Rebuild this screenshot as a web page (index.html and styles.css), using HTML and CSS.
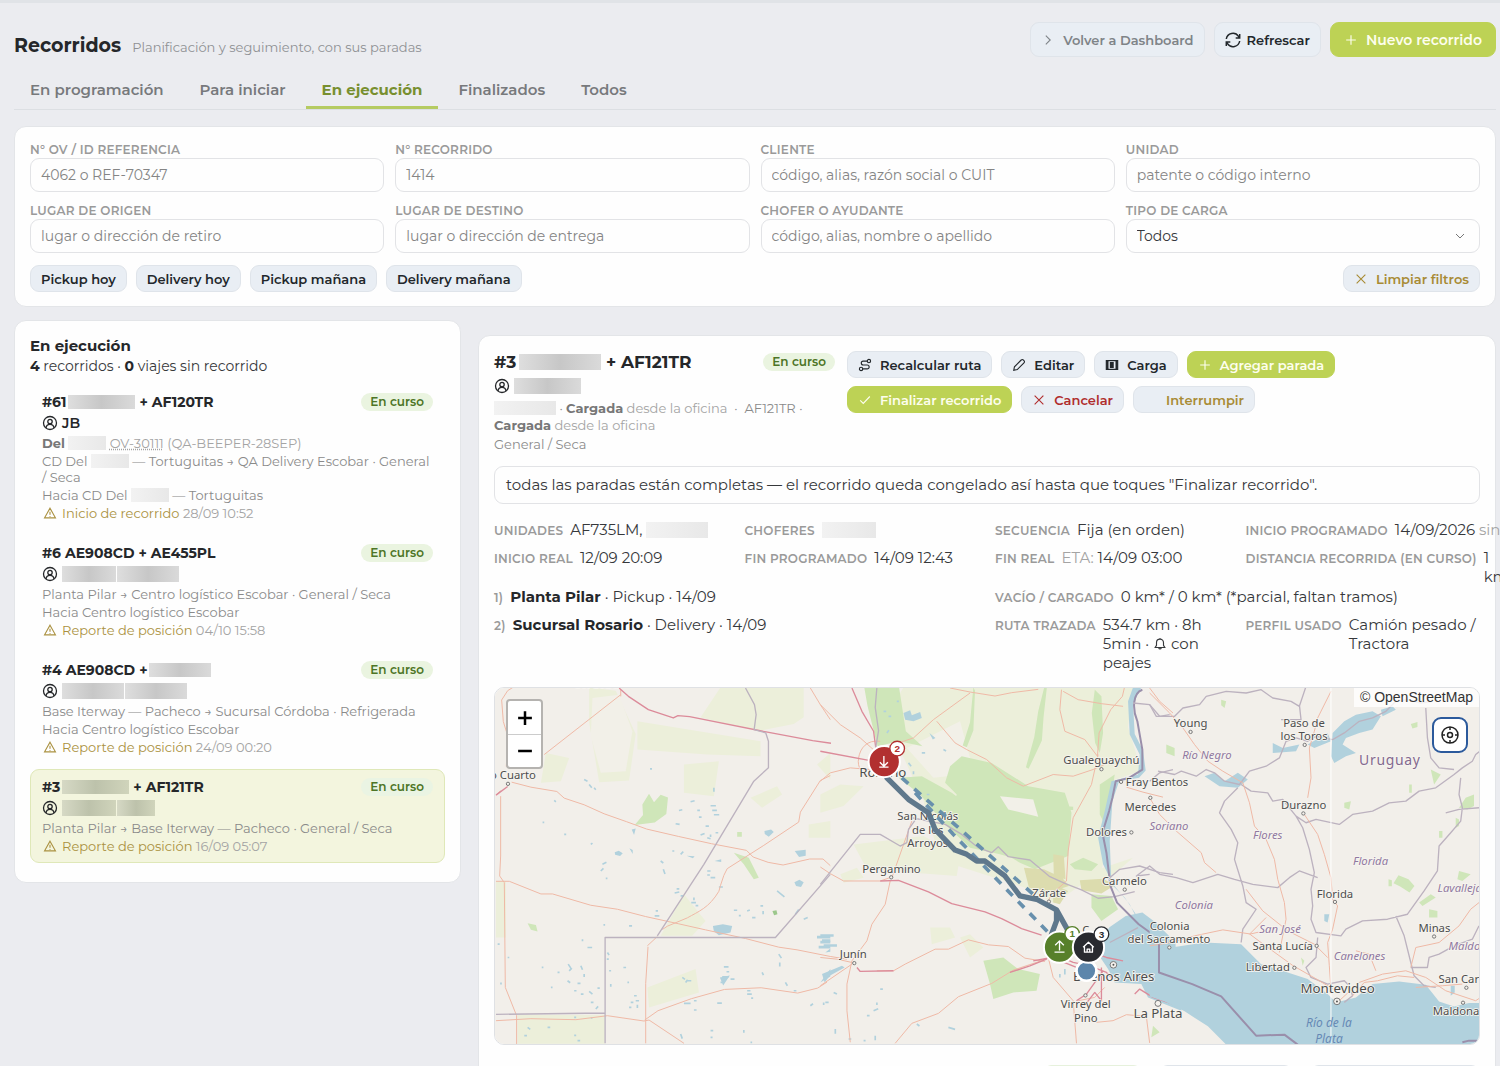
FILE: index.html
```html
<!DOCTYPE html>
<html lang="es">
<head>
<meta charset="utf-8">
<meta name="viewport" content="width=device-width, initial-scale=1">
<title>Recorridos</title>
<link rel="stylesheet" href="styles.css">
</head>
<body>
<svg class="sprite" aria-hidden="true">
  <symbol id="i-user" viewBox="0 0 16 16"><circle cx="8" cy="8" r="6.5"/><circle cx="8" cy="6.5" r="2.2"/><path d="M4 13c.3-2.300 1.800-3.600 4-3.600s3.700 1.300 4 3.600"/></symbol>
  <symbol id="i-warn" viewBox="0 0 16 16"><path d="M8 2.500 14.200 13.500H1.800ZM8 6.500v3.500M8 11.300v1"/></symbol>
  <symbol id="i-plus" viewBox="0 0 16 16"><path d="M8 2.500v11M2.500 8h11"/></symbol>
  <symbol id="i-x" viewBox="0 0 16 16"><path d="m3 3 10 10M13 3 3 13"/></symbol>
  <symbol id="i-check" viewBox="0 0 16 16"><path d="m2.500 8.500 3.500 3.500 7.500-8"/></symbol>
  <symbol id="i-right" viewBox="0 0 16 16"><path d="m5.500 3 5 5-5 5"/></symbol>
  <symbol id="i-refresh" viewBox="0 0 16 16"><path d="M1.300 7A6.700 6.700 0 0 1 13.500 4.400l1 1.400M14.700 9A6.700 6.700 0 0 1 2.500 11.600l-1-1.400M14.700 2v4h-4M1.300 14v-4h4"/></symbol>
  <symbol id="i-route" viewBox="0 0 16 16"><circle cx="12.500" cy="3.500" r="1.900"/><circle cx="3.500" cy="12.500" r="1.900"/><path d="M10.600 3.500H6a2.200 2.200 0 0 0 0 4.500h4.500a2.200 2.200 0 0 1 0 4.500H5.400"/></symbol>
  <symbol id="i-pen" viewBox="0 0 16 16"><path d="m2 14 .8-4L10.500 2.300a1.700 1.700 0 0 1 2.500 0l.7.700a1.700 1.700 0 0 1 0 2.500L6 13.200Z"/></symbol>
  <symbol id="i-load" viewBox="0 0 16 16"><path d="M1.500 3h13v10h-13Z"/><path class="solid" d="M5.500 4.500h4.500v7H5.500ZM1.500 3H4v10H1.500ZM12 3h2.500v10H12Z"/></symbol>
  <symbol id="i-bell" viewBox="0 0 16 16"><path d="M2.500 12h11L12 9.500V6.500a4 4 0 0 0-8 0v3ZM8 1v1.500M6.500 12.500a1.600 1.600 0 0 0 3 0"/></symbol>
  <symbol id="i-target" viewBox="0 0 20 20"><circle cx="10" cy="10" r="8"/><circle cx="10" cy="10" r="2.500"/><path d="M10 2v3M10 15v3M2 10h3M15 10h3"/></symbol>
</svg>

<main class="page">
  <header class="page-head">
    <div class="heading">
      <h1>Recorridos</h1>
      <p>Planificación y seguimiento, con sus paradas</p>
    </div>
    <div class="head-actions">
      <button class="btn muted" type="button"><svg class="icon"><use href="#i-right"/></svg>Volver a Dashboard</button>
      <button class="btn snug" type="button"><svg class="icon large"><use href="#i-refresh"/></svg>Refrescar</button>
      <button class="btn primary" type="button"><svg class="icon"><use href="#i-plus"/></svg>Nuevo recorrido</button>
    </div>
  </header>

  <nav class="tabs">
    <a href="#programacion">En programación</a>
    <a href="#iniciar">Para iniciar</a>
    <a href="#ejecucion" class="active" aria-current="page">En ejecución</a>
    <a href="#finalizados">Finalizados</a>
    <a href="#todos">Todos</a>
  </nav>

  <form class="card filters">
    <div class="fields">
      <div class="field"><label for="f-ov">N° OV / ID REFERENCIA</label><input id="f-ov" type="text" placeholder="4062 o REF-70347"></div>
      <div class="field"><label for="f-rec">N° RECORRIDO</label><input id="f-rec" type="text" placeholder="1414"></div>
      <div class="field"><label for="f-cli">CLIENTE</label><input id="f-cli" type="text" placeholder="código, alias, razón social o CUIT"></div>
      <div class="field"><label for="f-uni">UNIDAD</label><input id="f-uni" type="text" placeholder="patente o código interno"></div>
      <div class="field"><label for="f-ori">LUGAR DE ORIGEN</label><input id="f-ori" type="text" placeholder="lugar o dirección de retiro"></div>
      <div class="field"><label for="f-des">LUGAR DE DESTINO</label><input id="f-des" type="text" placeholder="lugar o dirección de entrega"></div>
      <div class="field"><label for="f-cho">CHOFER O AYUDANTE</label><input id="f-cho" type="text" placeholder="código, alias, nombre o apellido"></div>
      <div class="field"><label for="f-tip">TIPO DE CARGA</label><select id="f-tip"><option>Todos</option></select></div>
    </div>
    <div class="chips">
      <button class="btn small" type="button">Pickup hoy</button>
      <button class="btn small" type="button">Delivery hoy</button>
      <button class="btn small" type="button">Pickup mañana</button>
      <button class="btn small" type="button">Delivery mañana</button>
      <button class="btn small warn push" type="reset"><svg class="icon"><use href="#i-x"/></svg>Limpiar filtros</button>
    </div>
  </form>

  <div class="columns">
    <section class="card list">
      <h2>En ejecución</h2>
      <p class="count"><b>4</b> recorridos · <b>0</b> viajes sin recorrido</p>
      <ul class="trips">
        <li class="trip">
          <div class="trip-top"><h3>#61 <span class="mask w68"></span> + AF120TR</h3><span class="badge">En curso</span></div>
          <p class="driver"><svg class="icon"><use href="#i-user"/></svg>JB</p>
          <p><b>Del</b> <span class="mask pale w40"></span> <span class="faint"><abbr>OV-30111</abbr> (QA-BEEPER-28SEP)</span></p>
          <p>CD Del <span class="mask pale w40"></span> — Tortuguitas → QA Delivery Escobar · General / Seca</p>
          <p>Hacia CD Del <span class="mask pale w40"></span> — Tortuguitas</p>
          <p class="event"><svg class="icon"><use href="#i-warn"/></svg>Inicio de recorrido <time>28/09 10:52</time></p>
        </li>
        <li class="trip">
          <div class="trip-top"><h3>#6 AE908CD + AE455PL</h3><span class="badge">En curso</span></div>
          <p class="driver"><svg class="icon"><use href="#i-user"/></svg><span class="mask w50"></span><span class="mask w60"></span></p>
          <p>Planta Pilar → Centro logístico Escobar · General / Seca</p>
          <p>Hacia Centro logístico Escobar</p>
          <p class="event"><svg class="icon"><use href="#i-warn"/></svg>Reporte de posición <time>04/10 15:58</time></p>
        </li>
        <li class="trip">
          <div class="trip-top"><h3>#4 AE908CD + <span class="mask w60"></span></h3><span class="badge">En curso</span></div>
          <p class="driver"><svg class="icon"><use href="#i-user"/></svg><span class="mask w60"></span><span class="mask w60"></span></p>
          <p>Base Iterway — Pacheco → Sucursal Córdoba · Refrigerada</p>
          <p>Hacia Centro logístico Escobar</p>
          <p class="event"><svg class="icon"><use href="#i-warn"/></svg>Reporte de posición <time>24/09 00:20</time></p>
        </li>
        <li class="trip selected">
          <div class="trip-top"><h3>#3 <span class="mask w68"></span> + AF121TR</h3><span class="badge">En curso</span></div>
          <p class="driver"><svg class="icon"><use href="#i-user"/></svg><span class="mask w50"></span><span class="mask w40"></span></p>
          <p>Planta Pilar → Base Iterway — Pacheco · General / Seca</p>
          <p class="event"><svg class="icon"><use href="#i-warn"/></svg>Reporte de posición <time>16/09 05:07</time></p>
        </li>
      </ul>
    </section>

    <section class="card detail">
      <div class="detail-head">
        <div class="summary">
          <div class="trip-top"><h2>#3 <span class="mask w80"></span> + AF121TR</h2><span class="badge">En curso</span></div>
          <p class="driver"><svg class="icon"><use href="#i-user"/></svg><span class="mask w68"></span></p>
          <p class="cargo"><span class="mask pale w60"></span> · <b>Cargada</b> <span class="faint">desde la oficina</span> &nbsp;·&nbsp; AF121TR ·<br><b>Cargada</b> <span class="faint">desde la oficina</span></p>
          <p>General / Seca</p>
        </div>
        <div class="actions">
          <button class="btn small" type="button"><svg class="icon"><use href="#i-route"/></svg>Recalcular ruta</button>
          <button class="btn small" type="button"><svg class="icon"><use href="#i-pen"/></svg>Editar</button>
          <button class="btn small" type="button"><svg class="icon"><use href="#i-load"/></svg>Carga</button>
          <button class="btn small primary" type="button"><svg class="icon"><use href="#i-plus"/></svg>Agregar parada</button>
          <button class="btn small primary" type="button"><svg class="icon"><use href="#i-check"/></svg>Finalizar recorrido</button>
          <button class="btn small danger" type="button"><svg class="icon"><use href="#i-x"/></svg>Cancelar</button>
          <button class="btn small warn" type="button"><svg class="icon"></svg>Interrumpir</button>
        </div>
      </div>

      <p class="notice">todas las paradas están completas — el recorrido queda congelado así hasta que toques "Finalizar recorrido".</p>

      <dl class="facts">
        <div><dt>UNIDADES</dt><dd>AF735LM, <span class="mask pale w60"></span></dd></div>
        <div><dt>CHOFERES</dt><dd><span class="mask pale w50"></span></dd></div>
        <div><dt>SECUENCIA</dt><dd>Fija (en orden)</dd></div>
        <div><dt>INICIO PROGRAMADO</dt><dd class="line">14/09/2026 <span class="faint">sin hora</span></dd></div>
        <div><dt>INICIO REAL</dt><dd>12/09 20:09</dd></div>
        <div><dt>FIN PROGRAMADO</dt><dd>14/09 12:43</dd></div>
        <div><dt>FIN REAL</dt><dd><span class="faint">ETA:</span> 14/09 03:00</dd></div>
        <div><dt>DISTANCIA RECORRIDA (EN CURSO)</dt><dd>1 km</dd></div>
      </dl>
      <dl class="facts route">
        <div class="wide"><dt>1)</dt><dd><b>Planta Pilar</b> · Pickup · 14/09</dd></div>
        <div class="wide"><dt>VACÍO / CARGADO</dt><dd>0 km* / 0 km* (*parcial, faltan tramos)</dd></div>
        <div class="wide"><dt>2)</dt><dd><b>Sucursal Rosario</b> · Delivery · 14/09</dd></div>
        <div><dt>RUTA TRAZADA</dt><dd>534.7 km · 8h<br>5min · <svg class="icon"><use href="#i-bell"/></svg> con<br>peajes</dd></div>
        <div><dt>PERFIL USADO</dt><dd>Camión pesado /<br>Tractora</dd></div>
      </dl>

      <div class="map">
        <svg class="map-canvas" viewBox="0 0 2958 1074" preserveAspectRatio="xMidYMid slice" role="img" aria-label="Mapa del recorrido">
          <rect class="land" width="2958" height="1074"/>
          <!-- west -->
          <g transform="translate(-42 -18)">
            <path class="field-green" d="M720 18h250v90l-30 20-100 20-100-20-80-20ZM470 120l370 60v45l-160-5-210-15ZM610 250l105-10-15 105-90-10ZM195 215l70 15-25 70-60 5ZM45 600h30v170H45ZM110 1003h262v86H110ZM500 920l145-55 10 70-150 45ZM540 765l70-125 65 80-40 45ZM985 430l65-10v50h-65ZM1010 250l40-35v80ZM810 350l80-35 15 25-60 40ZM325 18l80 10 60 130-20 140-90 5-30-180Z"/>
            <path class="field-white" d="M335 50l80-10 40 110-20 120-75 5-30-110Z"/>
            <path class="wood" d="M485 370l20-32 15 25 20-22 22 8-5 50-35 25-60 8 25-30ZM760 515l45 15 30 60-15 5-30-45ZM770 453h14v14h-14ZM140 727l25 5 5 20-20-5Z"/>
            <path class="wood dark" d="m876 690 12-2 3 12-10 3Z"/>
            <path class="water" d="M697 735l30-5 28 5-5 20-35 8-15-12ZM943 510l33-4v18l-20 4ZM942 604l15-8 13 8-8 14-15-3ZM852 450l20-5 8 8-15 14-12-8ZM402 514l12-5 12 8-8 8-15-4ZM453 445l12-3-5 20ZM446 502l10 5v12ZM702 540l20-5v8ZM618 524l24 2-5 6ZM1010 765h40v8h-40ZM1020 780h30v8h-30ZM1015 795h35v8h-35ZM1035 815l15-12v10ZM1020 905l30-40v22ZM718 890l30-6-20 30Z"/>
            <path class="specks" d="M310 295l10 5M325 310l8 10M340 320l5 6M508 263h6M700 320v12M630 362l12-3M595 388l10-2M690 374h16M695 388h14M700 401h16M585 428l12 2M650 388h8M655 408h8M675 435h10M660 462l12-5M690 460v8M680 470l10 3M705 455h8M360 570l8-8M365 550l12-6M330 490l5-4M375 592h5M220 358l5 4M185 424h5M250 460h6M540 540l8 6M548 565l5 14M575 510h6M600 520l8-8M582 636l14-3M588 624h8M600 645h10M632 665h14M645 674h8M640 650v8M680 570h10M690 590h14M680 582h8M715 618h12M760 688h10M775 704h6M800 690l8-3M815 710h10M848 690v10M840 675h8M890 630l10 8 12 10M945 700l10-14M970 715l12-5M522 705h14M525 690h7M445 735h9M368 732h5M305 775v6M320 800h14M262 850l8 12M265 870l8-8M300 855l5 12M310 880v9M260 900l8 6M290 908h9M280 930h7M300 940h8M325 932l10 8M350 922h7M330 965h8M345 985l7-8M380 815l5 8M378 835h6M428 860h8M385 870h6M390 910v8M440 905h5M460 945h8M465 960h10M450 965h8M470 972v10M445 980h7M185 857v5M230 875h6M210 920h5M80 830h5M50 790h6M60 905v6M730 858h14M738 873h8M725 888h20M750 895h12M720 905h8M845 875l4 8M895 820l8 12M898 845v12M915 905l6 10M940 930h8M800 930h10M800 940h14M812 952h6M710 967h14M610 968h20M640 960h8M620 900h12M605 890l8 6M615 905l6-8M640 988h8M600 1060l5 14M690 1050h8M690 1070h6M790 1048v8M810 1085h5M990 975l8-6M1035 965h10M280 1010h6M330 1012h5M140 1040l8 6M200 1040h8M130 1065h8M280 1064h6M290 1080h8"/>
            <path class="road" d="M96 18 80 28 62 56l5 65 14 45-5 90M420 40 190 220M420 25v20M990 20l30 50 30 45M92 303l58 15 78 13 22 20 60 20 60 27 68 24 60 22 95 22 100 22 105 20 20 20 45 16 45 8 80-18h40l22 20M1050 283l-30 15-60 95-5 30-105 70-110 70-10 20-10 30-5 18c-30 50-60 60-95 80l-60 25-15 10M45 342l14-14M45 601h40l95 38h35l115 34 80 12 85 22 100 22 80 18 120 26 100 26 55 8 100 20 50 8M59 345v180l-3 60 14 20 3 315 34 85v85M45 1020l105-6 135 3 95-12 110 16 15-3 105 70M500 795l30-28M495 1088v-180l7-110M492 1018l40-28 100-36 100-28 110-5 110 16 60-15 28-18"/>
            <path class="road major" d="m415 20 28 25 60 40 75 25 14-7 35 3 230 46 140 26 55 8"/>
            <path class="road major" d="m45 342 35-26"/>
            <path class="border" d="m795 20 27 50 5 30-6 45 35 10 8 25v80l-44 40-150 250-140 215M373 1088V770h512l165-190M45 1001l328-4"/>
          </g>
          <!-- centre -->
          <g transform="translate(978 -18)">
            <path class="field-green" d="M250 18h690l-15 120 40 130-85 30-15 180-20 90-140 100-95-50-250-80-50-180-60-130-60-110ZM100 490l210-25 110 60-10 60-270-20ZM60 580l50-20 20 30-60 15ZM760 590l180-60-70 60-90 20ZM420 770l30-10 40 40-40 30ZM0 340l60-30 70 5-60 60-70 20ZM330 740h60l15 30-70 20Z"/>
            <path class="field-white" d="m260 200 160-80 30 110 150 90 60 20-120 20-110-80-90 10Z"/>
            <path class="wood" d="m132 18 105 2 20 130 50 45-70-15-65 15-30-120ZM390 255l35-30 90 20 110 70 110 20 20 60-10 130-100 40-45-20-130-75-100-60 60-10-30-30 10-30-35-35ZM235 290l70-5 90 50 60 45 75 55 60 45 20 60-70-20-90-20-80-75-70-85ZM655 90l18-72h8l-10 90-5 70-40 85-8-5 25-90ZM460 18l5 10-5 120-20 50-12-5 22-70ZM825 25l20 20 5 110-10 60-14-30-10-90ZM840 310l45-30-25 160-20-40ZM815 640l60 5 20 40-50 35-30-40ZM490 840l60-10 45 35 65 15-10 50-70 5-60 20-10-45ZM750 550l40-20 45 20-20 20-50-5ZM700 372l60 5v10l-50-5ZM1000 1035l20 20-25 15Z"/>
            <path class="field-white" d="m540 345 100 10 15 52-90-22Z"/>
            <path class="scrub" d="m700 520 32 5 5 70-35-10ZM612 560l60 5 55 25 20 25-60 20-60-15ZM780 598l70-5 35 20-40 25-60-10ZM700 610l45 20-25 40-20-5Z"/>
            <path class="water" d="M940 18h25l-25 50 5 90 25 50 8 60-20 22-60 10-20 60-8 120 5 130 40 40 40 60 60 50 10 50-120-70-60 5-20 60 40 60 20 40 80 5 20 40 100 40v-115H990V790l-60-120-50-60-30-60-15-80 20-80 20-90 80-20 5-60-30-60-5-100Z"/>
            <path class="water" d="m868 740 50-35 50-10 40 30 60 60 0 130-50-10-40-30-50-20-25-10-10-50-25-40ZM250 95l20-8 5 15 25-10 5 18-25 10-25-5ZM328 155l18 15-8 5ZM0 760h40v8H0ZM5 775h25v8H5ZM10 790h40v8H10ZM5 880l60-25 8 5-45 25-15 20Z"/>
            <path class="specks" d="M190 90h8M205 105h8M230 60h6M200 155l6-8M265 245l8 10M280 270v9M305 215h10M320 340h8M370 205l8 4M210 260h8M40 935l10 5M10 965v8M170 965v8M160 990l14-6M140 1005h8M45 1045v14M85 1075h8M165 1065v14M130 1080h6M290 1030l8 6M385 1040l20 6M180 925h8M720 880v10M735 865v16"/>
            <path class="road" d="m390 20 60 12 75 12 50-10 80-10M0 70l60 60 60 40 45 40M450 35l-110 80-60 55-120 40M350 120l55 65 35 20 60 30 60 55 50 25 90-35 60 5 60-20 45-20M725 25l-5 60 15 65 60 25 38 50 5-70 35-70 35-40 15-65M730 30l45 25 70 12 65 8M835 220l-20 90-55 100-15 100-5 90-45 40-10 20M180 180c-40-5-60 20-65 50s10 50 40 60M0 300l30-25 60-15 60 5M275 420l-60 170M0 558l30 20 40 22h110l35-12M210 600l-15 70-40 60-15 50-45 60-15 70v80l10 95M225 1088l50-60 80-30 60-50 100-40 65-40 90-30M170 870h50l35-20 90-45h40l60-28 60 15 60 5 50 35 60 10M0 915l95-65M0 830l50 5 45 10M685 830l15 60 60 70 10 128M775 960l50-10 30-30M830 1025l50-5 40-18 60 5 10 80M990 20l30 40 40 35M920 318l50 15 60 15"/>
            <path class="road major" d="m95 20 30 70 35 60 8 60M0 210l150 28M180 600l55-2 90 35 70 35 100 25 50 20 60 30 60 20M110 860l10 12 100-2M570 875l60-20 50-20 10-20 70 30 50 10 50 20 20 20M640 840l55-10 75 30M845 860v100l-20-25-35 45M945 940l15-15 40 25 60 20M830 820l30 10 50 10M850 870l-50 70-30 20"/>
            <path class="border" d="m0 610 60-75 60-75 60 0 60 35 20-10 5-40 25-35M275 410l100 20 50 30 50 40 40 15 20-18 30 30 65 10 60 50 45 20 50 20 50 25 50-5 60-15M170 18l-5 60 10 70-10 60"/>
            <path class="border strong" d="M968 25c-30 10-30 60-15 95l15 85v60l-40 25-40 10-10 50-10 40-20 65 12 60 12 100 20 50 65 65 55 40M1018 780v93l50 10"/>
            <path class="border" d="m870 785 85-45M940 65l50 5 30 35 30-5M870 590l30-25 60-10 60 20 40 5M990 300l30-25 40-10"/>
          </g>
          <!-- east -->
          <g transform="translate(1968 -18)">
            <path class="water" d="m0 725 30 25 35 50 100-15 110 5 60 60 80 25 60 20 60 45 25 25 60-15 50-40 80-8 80 10 40 50 45 15 45-10 35 0v130H235l-60-60-70-45-60-30-45-15Z"/>
            <path class="water" d="m550 155 35-35 35-20 50-10 25 15-25 40-40 10-40 15-10 20 40 25-30 10-35 20-10-20ZM475 190l60-35 10 25-50 20ZM370 185l30 15 50-10-10 20-70 5ZM165 285l30-10 30 25 40-25 30 20-30 25-55-5ZM695 85l35-10 10 10-40 20ZM905 915h12v20l-12 10ZM525 700l15 0-5 25-10-5Z"/>
            <path class="wood" d="m748 583 30 12 18 20-15 20-28-18-20-10ZM718 595l10 3v18h-10ZM845 640l15 10-40 25-10-10ZM840 685l25 5v20l-25 0ZM585 365l20-5-5 25-15-5ZM930 380l20-30 25-10v35l-20 10ZM845 265l30 15-20 30ZM930 570l35 10-25 20-15-5ZM785 128l20-6v15l-15 5ZM50 190l25 10v25l-25-10ZM215 55l15 5-5 20-10-8ZM870 450h10v20h-10ZM920 410l10 5v20l-10 5ZM780 310h8v25h-8ZM455 830l10 10-5 15Z"/>
            <path class="border" d="m0 70 20 35h55l25-25 50-10 20-25 60-15 60 5 45-10 35 25 55 10 25 15 20-60M450 70l5 45-60 0M0 580l-40 5 40-30 30 25 50 10 50 15 75-25 50 15 55 15 75 10 35-30 30-20 55 20M25 270l50 10 20-10 45 15 30-20 25 10 30 25 45 10 30-40 50-15 40-25 20-50 30-10 35 10 25-15 50 10 35-20 45-35 40-10 40-20 30-30 35-5 40 10 35-5M265 320l-40 40-15 35 35 50 20 40-10 50 25 80 10 50 30 20-40 60-5 40M275 310l30 20 50 5 15 25 30-5 40 50 30 20 30-10 70 15 40-30 60-10 50-25 50-5 40-30 50-10 55-40 25-20 30-20 10-20 50-40M440 405l20 35 20 65 15 70-10 50 5 50-5 40 15 40 75 10 15-20 50-25 75-5 60-15 50-70 40-60 5-75 35-40 30-35 5-40-10-40 5-50M890 395l40-10 60-5M830 80l5 90 10 60 25 30 45 5M740 705l25 60 20 80 10 40 30 30 35 5M785 860h50l5-30 30-10 45-25 55-20 20-40M505 770l-5 60-30 30 15 30 50 20 50-10 15 15 10 30-25 20"/>
            <path class="road" d="m0 35 60 60 40 45 35 50 40 50 45 30 60 35 20 60 15 70 35 40 25 60 10 60 20 70 5 50-20 100M545 30l-40 80-10 40-15 50 5 90-10 60M465 400l40 60 20 60 20 70 5 65 15 20-15 70-15 40 5 70 5 70M0 350l30 50 50 50 75 65 10 30 35 30M290 625l50 65 75 60 40 20 40 20 40 40M0 795l65-10 70-20 85-18 80 12 40 30 90 65 70 40 50 30M570 960l60-55 70-25 70-10 60 20 60 40 90 30 15-10M800 920l80-5 60-5M785 860l15-60 70-15 60-50 35-50 25-20M300 760l45-10M300 760l50-50"/>
            <path class="road" d="m610 945 35-40 40-5 60-15 50 5M680 870l-20-50-40-10"/>
            <path class="border strong" d="M28 790v85l100 35 87 37 105 118 85-3 40 30M940 1085l20-5h30"/>
            <path class="seam" d="M545 18v1071"/>
          </g>

          <g class="labels" transform="translate(-42 -18)">
            <text class="town" x="81" y="292">Río Cuarto</text><circle cx="81" cy="308" r="5"/>
            <text class="town" x="346" y="20">Córdoba</text>
          </g>
          <g class="labels" transform="translate(978 -18)">
            <text class="city" x="188" y="288">Rosario</text>
            <text class="town" x="323" y="418">San Nicolás</text><text class="town" x="323" y="458">de los</text><text class="town" x="323" y="498">Arroyos</text>
            <text class="town" x="214" y="575">Pergamino</text><circle cx="213" cy="589" r="5"/>
            <text class="town" x="99" y="832">Junín</text><circle cx="102" cy="847" r="5"/>
            <text class="town" x="845" y="249">Gualeguaychú</text><circle cx="845" cy="264" r="5"/>
            <text class="town" x="1012" y="314">Fray Bentos</text><circle cx="904" cy="302" r="5"/>
            <text class="town" x="992" y="389">Mercedes</text><circle cx="992" cy="350" r="5"/>
            <text class="region" x="1048" y="447">Soriano</text>
            <text class="town" x="860" y="465">Dolores</text><circle cx="935" cy="454" r="5"/>
            <text class="town" x="914" y="612">Carmelo</text><circle cx="915" cy="626" r="5"/>
            <text class="town" x="688" y="648">Zárate</text><circle cx="687" cy="662" r="5"/>
            <text class="town" x="798" y="760">C</text>
            <text class="city" x="882" y="901">Buenos Aires</text><circle cx="881" cy="852" r="10"/><circle class="dot" cx="881" cy="852" r="3"/>
            <text class="town" x="798" y="983">Virrey del</text><text class="town" x="798" y="1023">Pino</text><circle cx="797" cy="944" r="5"/>
            <text class="city" x="1015" y="1011">La Plata</text><circle cx="1015" cy="968" r="9"/>
            <text class="town" x="1050" y="746">Colonia</text><text class="town" x="1048" y="786">del Sacramento</text><circle cx="1049" cy="800" r="5"/>
          </g>
          <g class="labels" transform="translate(1968 -18)">
            <text class="town" x="123" y="138">Young</text><circle cx="123" cy="152" r="5"/>
            <text class="town" x="464" y="137">Paso de</text><text class="town" x="464" y="177">los Toros</text><circle cx="466" cy="191" r="5"/>
            <text class="region" x="172" y="233">Río Negro</text>
            <text class="country" x="722" y="251">Uruguay</text>
            <text class="town" x="463" y="385">Durazno</text><circle cx="462" cy="397" r="5"/>
            <text class="region" x="355" y="473">Flores</text>
            <text class="region" x="664" y="553">Florida</text>
            <text class="town" x="557" y="650">Florida</text><circle cx="557" cy="663" r="5"/>
            <text class="region" x="932" y="634">Lavalleja</text>
            <text class="region" x="133" y="684">Colonia</text>
            <text class="region" x="392" y="755">San José</text>
            <text class="town" x="400" y="807">Santa Lucía</text><circle cx="502" cy="795" r="5"/>
            <text class="region" x="631" y="839">Canelones</text>
            <text class="town" x="355" y="872">Libertad</text><circle cx="435" cy="861" r="5"/>
            <text class="city" x="565" y="937">Montevideo</text><circle cx="563" cy="962" r="10"/><circle class="dot" cx="563" cy="962" r="3"/>
            <text class="town" x="856" y="752">Minas</text><circle cx="855" cy="767" r="5"/>
            <text class="region" x="985" y="807">Maldonado</text>
            <text class="town" x="952" y="906">San Carlos</text><circle cx="952" cy="921" r="5"/>
            <text class="town" x="942" y="1002">Maldonado</text><circle cx="942" cy="966" r="5"/>
            <text class="sea" x="539" y="1038">Río de la</text><text class="sea" x="539" y="1086">Plata</text>
          </g>

          <g transform="translate(978 -18)">
            <path class="plan" d="m245 290 165 145 235 210M285 335l115 125 290 300"/>
            <path class="track" d="m200 290 65 65 60 40 20 50 60 62 35 13 30 20h25l60 45 45 60 50 10 60 32 35 63M710 690v30l-15 40"/>
            <circle class="pin here" cx="800" cy="870" r="30"/>
            <circle class="pin drop" cx="192" cy="241" r="47"/>
            <path class="glyph" d="M191 224v31m-12-12 12 12 12-12M177 258h28"/>
            <circle class="pin pick" cx="719" cy="799" r="47"/>
            <path class="glyph" d="M719 809v-28m-13 12 13-13 13 13M704 814h30"/>
            <circle class="num pick" cx="757" cy="759" r="22"/><text class="num-text pick" x="757" y="769">1</text>
            <circle class="pin base" cx="806" cy="799" r="47"/>
            <path class="glyph" d="m790 799 16-15 16 15M794 796v18h24v-18M802 814v-9h8v9"/>
            <circle class="num drop" cx="231" cy="202" r="22"/><text class="num-text drop" x="231" y="212">2</text>
            <circle class="num base" cx="845" cy="760" r="22"/><text class="num-text base" x="845" y="770">3</text>
          </g>
        </svg>
        <div class="zoom">
          <button type="button" aria-label="Acercar"><svg class="icon"><use href="#i-plus"/></svg></button>
          <button type="button" aria-label="Alejar"><svg class="icon" viewBox="0 0 16 16"><path d="M2.500 8h11"/></svg></button>
        </div>
        <a class="credit" href="#osm">© OpenStreetMap</a>
        <button class="locate" type="button" aria-label="Centrar"><svg class="icon"><use href="#i-target"/></svg></button>
      </div>

      <div class="foot">
        <button class="btn primary soft" type="button" aria-label="Agregar"></button>
        <button class="btn mid" type="button" aria-label="Editar"></button>
        <button class="btn long" type="button" aria-label="Ver"></button>
      </div>
    </section>
  </div>
</main>
</body>
</html>
```
FILE: styles.css
```css
* { box-sizing: border-box; }
html { scrollbar-width: none; }
body {
  margin: 0;
  overflow-x: hidden;
  background: #ebecf0;
  border-top: 3px solid #e0e3e7;
  color: #36383b;
  font-family: Montserrat, Inter, "Liberation Sans", sans-serif;
  font-size: 14px;
}
h1, h2, h3, p, ul, dl, dd { margin: 0; padding: 0; }
ul { list-style: none; }
b, h1, h2, h3 { font-weight: 700; color: #25272a; }
button, input, select { font: inherit; }
.sprite { position: absolute; width: 0; height: 0; }
.icon {
  width: 14px;
  height: 14px;
  flex: none;
  fill: none;
  stroke: currentColor;
  stroke-width: 1.3;
}
.icon.large { width: 16px; height: 16px; stroke-width: 1.5; }
.solid { fill: currentColor; stroke: none; }
.faint { color: #a4a4a4; }

.page { padding: 19px 4px 0 14px; }
.page-head { display: flex; justify-content: space-between; align-items: flex-start; }
.heading { display: flex; align-items: baseline; gap: 11px; padding-top: 12px; }
h1 { font-size: 19px; line-height: 24px; }
.heading p { color: #8f9194; font-size: 13px; }
.head-actions { display: flex; gap: 9px; }

.btn {
  display: inline-flex;
  align-items: center;
  justify-content: center;
  gap: 8px;
  height: 35px;
  padding: 0 10px;
  border: 1px solid #dfe4ea;
  border-radius: 9px;
  background: #e9eef4;
  color: #22272b;
  font-size: 13px;
  font-weight: 600;
  white-space: nowrap;
}
.btn.snug { gap: 6px; }
.btn.muted { color: #7f8488; }
.btn.primary { padding: 0 13px; background: #bdd255; border-color: #bdd255; color: #fdfeee; font-size: 14px; }
.btn.small { height: 27px; font-size: 13px; }
.btn.small.primary { padding: 0 10px; }
.btn.warn { color: #a88b34; }
.btn.danger { color: #b02d2d; }
.btn.push { margin-left: auto; }

.tabs { display: flex; gap: 4px; margin-top: 11px; border-bottom: 1px solid #dcdfe3; }
.tabs a {
  padding: 12px 16px 7px;
  border-bottom: 3px solid transparent;
  color: #77797c;
  font-size: 15px;
  font-weight: 600;
  line-height: 18px;
  text-decoration: none;
}
.tabs .active { border-color: #b5cb62; color: #788f2f; font-weight: 700; }

.card { background: #fefefe; border: 1px solid #e3e5e8; border-radius: 12px; }
.filters { margin-top: 16px; padding: 14px 15px; }
.fields { display: grid; grid-template-columns: repeat(4, minmax(0, 1fr)); gap: 10px 11px; }
.field label, dt {
  color: #9a9a9a;
  font-size: 12px;
  font-weight: 600;
  letter-spacing: 0.02em;
}
.field label { display: block; line-height: 17px; }
.field input, .field select {
  display: block;
  width: 100%;
  height: 34px;
  padding: 0 10px;
  border: 1px solid #e2e3e6;
  border-radius: 9px;
  background: #fefefe;
  color: #36383b;
}
.field input::placeholder { color: #858585; opacity: 1; }
.field select {
  appearance: none;
  background: #fefefe url("data:image/svg+xml,%3Csvg xmlns='http://www.w3.org/2000/svg' width='10' height='6' fill='none' stroke='%23777'%3E%3Cpath d='m1 1 4 4 4-4'/%3E%3C/svg%3E") no-repeat right 14px center;
}
.chips { display: flex; gap: 9px; margin-top: 12px; }

.columns {
  display: grid;
  grid-template-columns: minmax(0, 447fr) minmax(0, 1018fr);
  gap: 17px;
  align-items: start;
  margin-top: 13px;
}
.list { padding: 15px 15px 19px; }
.list h2 { font-size: 15px; line-height: 20px; }
.count { font-size: 14px; line-height: 20px; }
.trips { display: grid; gap: 5px; margin-top: 8px; }
.trip {
  padding: 7px 11px;
  border: 1px solid transparent;
  border-radius: 9px;
  color: #8a8a8a;
  font-size: 13px;
  line-height: 16px;
}
.trip.selected { background: #f3f5de; border-color: #dfe8b8; }
.trip-top { display: flex; justify-content: space-between; align-items: center; }
.trip h3 { font-size: 14px; line-height: 20px; }
.trip p, .summary p { padding: 1px 0; }
.trip b, .summary b { color: #777; }
.badge {
  padding: 0 9px;
  border-radius: 9px;
  background: #eaf4e0;
  color: #4d7526;
  font-size: 12px;
  font-weight: 600;
  line-height: 18px;
}
.selected .badge { background: #eaf4e3; }
.trip .driver, .summary .driver {
  display: flex;
  align-items: center;
  gap: 4px;
  height: 22px;
  color: #25272a;
  font-size: 14px;
  font-weight: 600;
}
.driver .icon { width: 16px; height: 16px; }
.event { color: #aa9140; }
.event .icon { margin: 0 5px 0 1px; vertical-align: -2px; }
.event time { color: #a4a4a4; }
abbr { text-decoration: underline dotted; }

.mask {
  display: inline-block;
  height: 14px;
  background: linear-gradient(90deg, #dedede, #c7c7c7 50%, #dadada);
  vertical-align: -2px;
}
.mask.pale { background: linear-gradient(90deg, #f2f2f2, #e8e8e8); }
.selected .mask { background: linear-gradient(90deg, #d6d9c5, #bdc2ab 50%, #d0d4bb); }
h2 .mask, h3 .mask { margin-left: -2px; }
h2 .mask, .driver .mask, .facts .mask { height: 16px; }
.facts .mask { vertical-align: -3px; }
.driver .mask { margin-right: -3px; }
.w40 { width: 38px; }
.w50 { width: 54px; }
.w60 { width: 62px; }
.w68 { width: 67px; }
.w80 { width: 82px; }

.detail { margin-top: 15px; padding: 15px 15px 14px; }
.detail-head { display: grid; grid-template-columns: minmax(0, 341fr) minmax(0, 633fr); gap: 12px; }
.summary { color: #8a8a8a; font-size: 13px; line-height: 17px; }
.summary h2 { font-size: 17px; line-height: 22px; }
.summary .driver { height: 26px; }
.actions { display: flex; flex-wrap: wrap; align-content: flex-start; gap: 8px 9px; }
.notice {
  margin-top: 12px;
  padding: 9px 11px;
  border: 1px solid #e2e3e6;
  border-radius: 9px;
  font-size: 15px;
  line-height: 18px;
}
.facts {
  display: grid;
  grid-template-columns: repeat(4, minmax(0, 1fr));
  gap: 8px 16px;
  margin-top: 16px;
  font-size: 15px;
  line-height: 19px;
}
.facts > div { display: flex; gap: 7px; align-items: baseline; }
.facts .wide { grid-column: span 2; }
.facts.route { margin-top: 1px; }
.facts .icon { vertical-align: -2px; }
dt { flex: none; white-space: nowrap; }
.line { white-space: nowrap; }

.map {
  position: relative;
  height: 358px;
  margin-top: 15px;
  overflow: hidden;
  border: 1px solid #dfe1e4;
  border-radius: 10px;
}
.map-canvas { display: block; width: 100%; height: 100%; }
.map-canvas path { fill: none; stroke-linejoin: round; }
.land { fill: #f2efea; }
.map-canvas .field-green { fill: #ecefda; }
.map-canvas .field-white { fill: #f2f0e8; }
.map-canvas .wood { fill: #cfe6b9; }
.map-canvas .wood.dark { fill: #9cc78b; }
.map-canvas .scrub { fill: #dcdcae; }
.map-canvas .water { fill: #b1d1dd; }
.map-canvas .solid { fill: currentColor; }
.specks { stroke: #b1d1dd; stroke-width: 5; }
.road { stroke: #efb9a6; stroke-width: 3; }
.road.major { stroke: #dc8b9a; stroke-width: 4; }
.border { stroke: #bcb2bf; stroke-width: 4; }
.border.strong { stroke: #9a8fab; stroke-width: 6; }
.seam { stroke: #fff; stroke-width: 3; }
.labels { font-family: "Noto Sans", sans-serif; text-anchor: middle; fill: #4d4d4d; }
.labels text { paint-order: stroke; stroke: #f7f5f0; stroke-width: 5; }
.labels circle { fill: #f4f1ec; stroke: #777; stroke-width: 3; }
.labels .dot { fill: #555; stroke: none; }
.town { font-size: 34px; }
.city { font-size: 40px; }
.country { font-size: 42px; fill: #84698f; letter-spacing: 2px; }
.region { font-size: 34px; font-style: italic; fill: #9078a0; }
.labels text.sea { font-size: 36px; font-style: italic; fill: #6689b5; stroke: none; }
.track { stroke: #5f788c; stroke-width: 16; stroke-linecap: round; }
.plan { stroke: #6890ad; stroke-width: 11; stroke-dasharray: 26 24; }
.pin { stroke: #fff; stroke-width: 6; }
.pin.here { fill: #5c86ab; stroke-width: 8; }
.pin.drop { fill: #b23030; }
.pin.pick { fill: #57802a; }
.pin.base { fill: #292b30; }
.glyph { stroke: #fff; stroke-width: 4; }
.num { fill: #fff; stroke-width: 4; }
.num.drop { stroke: #b23030; }
.num.pick { stroke: #57802a; }
.num.base { stroke: #292b30; }
.num-text { font-family: "Liberation Sans", sans-serif; font-size: 30px; font-weight: 700; text-anchor: middle; }
.num-text.drop { fill: #b23030; }
.num-text.pick { fill: #57802a; }
.num-text.base { fill: #292b30; }
.zoom {
  position: absolute;
  top: 11px;
  left: 11px;
  display: grid;
  border: 2px solid #b5b3b0;
  border-radius: 4px;
  background: #fff;
}
.zoom button { display: grid; place-items: center; width: 33px; height: 33px; padding: 0; border: 0; background: none; color: #000; }
.zoom button + button { border-top: 1px solid #ccc; }
.zoom .icon { width: 20px; height: 20px; stroke-width: 2; }
.credit {
  position: absolute;
  top: 0;
  right: 0;
  padding: 0 6px;
  background: rgba(255, 255, 255, 0.8);
  color: #333;
  font-family: "Liberation Sans", sans-serif;
  font-size: 14px;
  line-height: 19px;
  text-decoration: none;
}
.locate {
  position: absolute;
  top: 29px;
  right: 11px;
  display: grid;
  place-items: center;
  width: 36px;
  height: 36px;
  padding: 0;
  border: 2px solid #2c5a9c;
  border-radius: 9px;
  background: #fff;
  color: #222;
}
.locate .icon { width: 20px; height: 20px; stroke-width: 1.5; }
.foot { display: flex; justify-content: flex-end; gap: 17px; margin-top: 20px; }
.foot .btn { width: 134px; }
.foot .long { width: 170px; }
.foot .soft { width: 99px; background: #e6f1dc; border-color: #e6f1dc; }
```
